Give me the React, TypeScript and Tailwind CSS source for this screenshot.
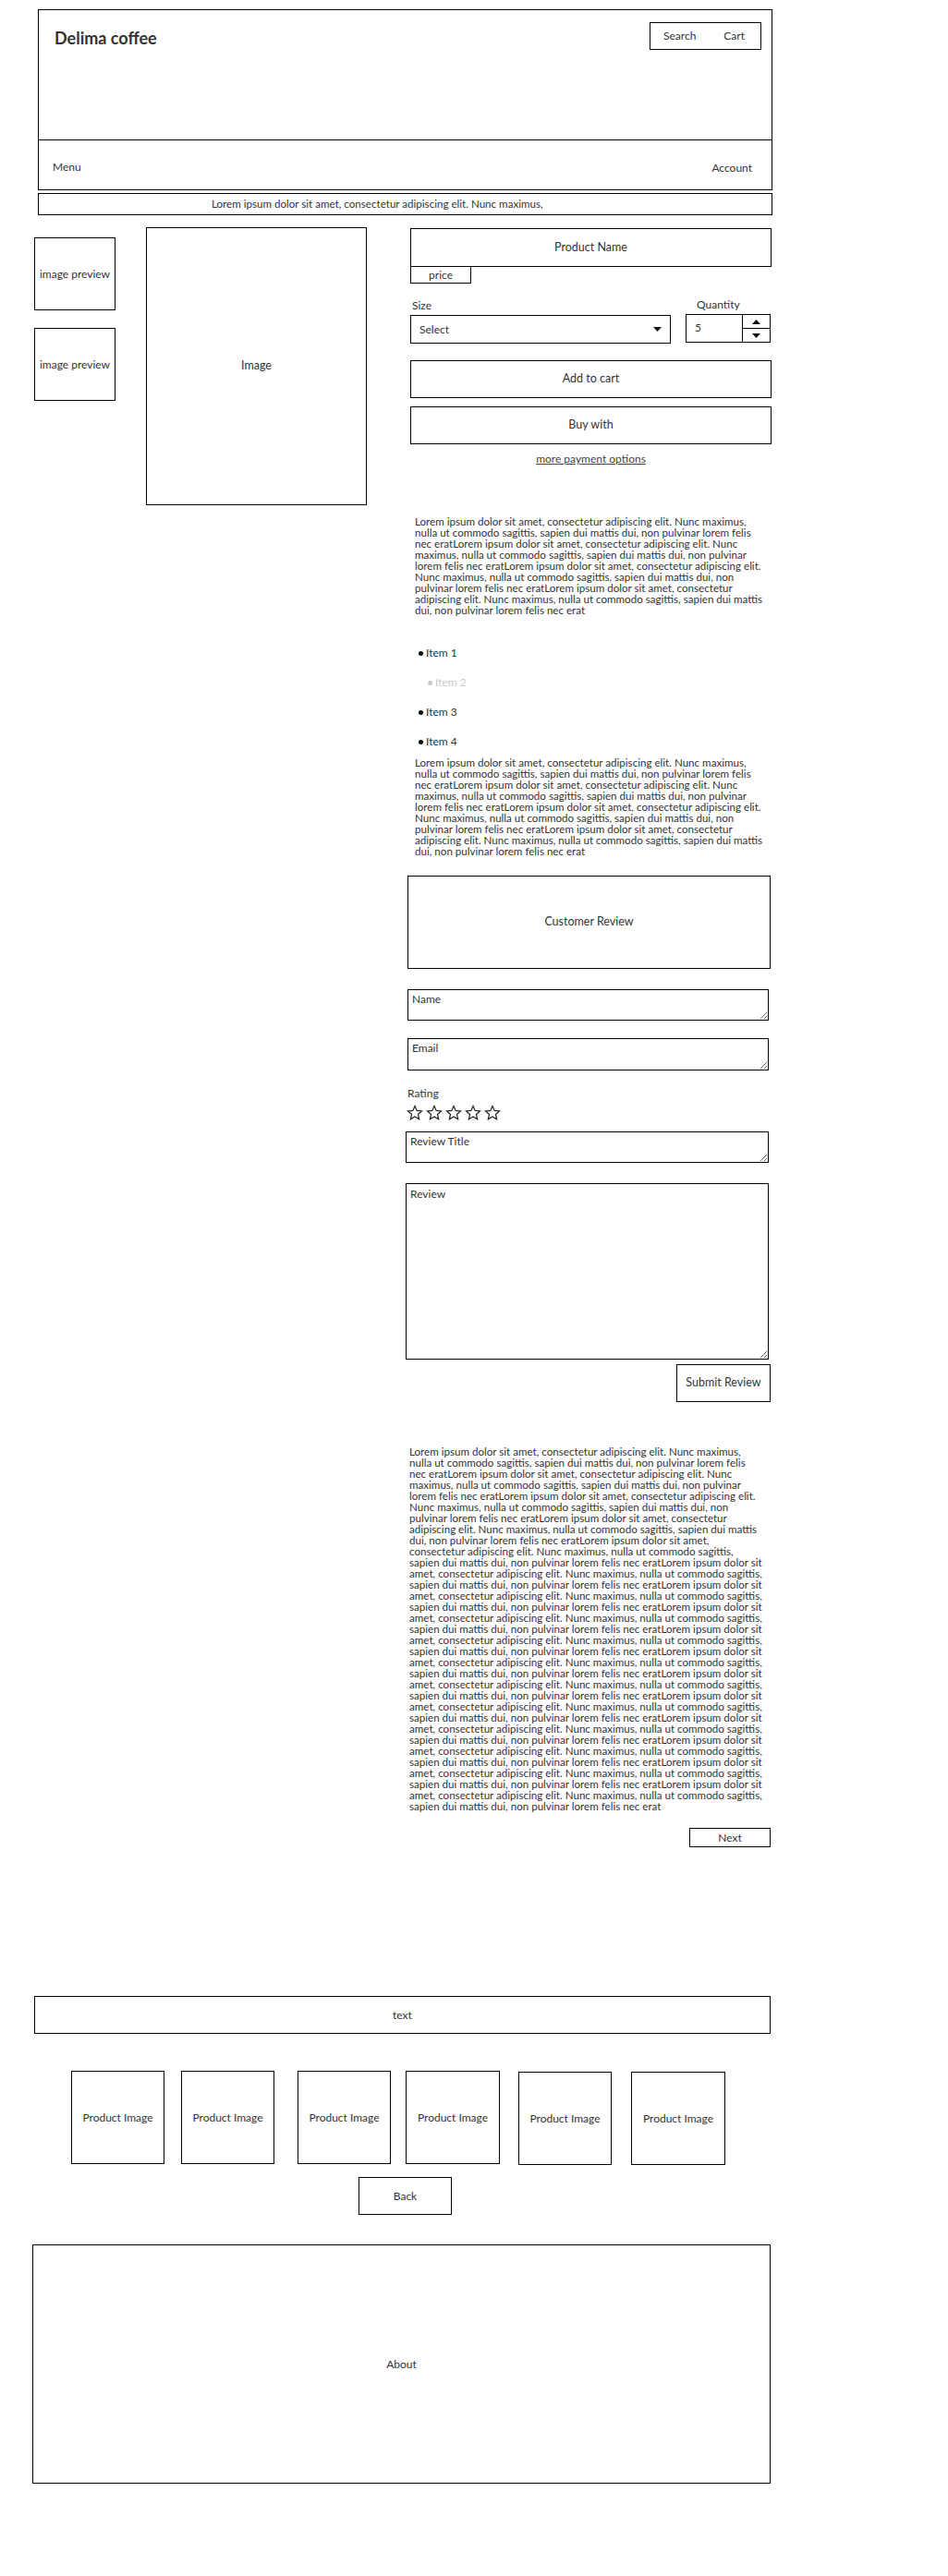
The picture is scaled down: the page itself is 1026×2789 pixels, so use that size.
import React from "react";

const P1 = [
  "Lorem ipsum dolor sit amet, consectetur adipiscing elit. Nunc maximus,",
  "nulla ut commodo sagittis, sapien dui mattis dui, non pulvinar lorem felis",
  "nec eratLorem ipsum dolor sit amet, consectetur adipiscing elit. Nunc",
  "maximus, nulla ut commodo sagittis, sapien dui mattis dui, non pulvinar",
  "lorem felis nec eratLorem ipsum dolor sit amet, consectetur adipiscing elit.",
  "Nunc maximus, nulla ut commodo sagittis, sapien dui mattis dui, non",
  "pulvinar lorem felis nec eratLorem ipsum dolor sit amet, consectetur",
  "adipiscing elit. Nunc maximus, nulla ut commodo sagittis, sapien dui mattis",
  "dui, non pulvinar lorem felis nec erat",
];

const LONG: string[] = [
  ...P1.slice(0, 8),
  "dui, non pulvinar lorem felis nec eratLorem ipsum dolor sit amet,",
  "consectetur adipiscing elit. Nunc maximus, nulla ut commodo sagittis,",
];
for (let i = 0; i < 11; i++) {
  LONG.push("sapien dui mattis dui, non pulvinar lorem felis nec eratLorem ipsum dolor sit");
  LONG.push("amet, consectetur adipiscing elit. Nunc maximus, nulla ut commodo sagittis,");
}
LONG.push("sapien dui mattis dui, non pulvinar lorem felis nec erat");

function Lines({ lines }: { lines: string[] }) {
  return (
    <div className="text-[11.6px] leading-[12px] text-[#333]">
      {lines.map((l, i) => (
        <div key={i} className="whitespace-nowrap">
          {l}
        </div>
      ))}
    </div>
  );
}

function Star() {
  return (
    <svg width="18" height="18" viewBox="0 0 24 24" fill="none" stroke="#222" strokeWidth="1.6" strokeLinejoin="miter">
      <polygon points="12,2 14.9,8.6 22,9.3 16.6,14 18.2,21 12,17.3 5.8,21 7.4,14 2,9.3 9.1,8.6" />
    </svg>
  );
}

function DownTri() {
  return (
    <svg width="9" height="5" viewBox="0 0 9 5">
      <polygon points="0,0 9,0 4.5,5" fill="#111" />
    </svg>
  );
}
function UpTri() {
  return (
    <svg width="9" height="5" viewBox="0 0 9 5">
      <polygon points="0,5 9,5 4.5,0" fill="#111" />
    </svg>
  );
}

export default function App() {
  const font = { fontFamily: "Lato, 'Noto Sans', sans-serif" };
  return (
    <div className="w-[1026px] min-h-[2789px] bg-white text-[#333]" style={font}>
      {/* Header */}
      <div className="ml-[41px] mt-[10px] w-[795px] border border-black">
        <div className="h-[140px] flex items-start justify-between">
          <div className="ml-[17px] mt-[19px] text-[18px] leading-[22px] font-bold text-[#333]">Delima coffee</div>
          <div className="mt-[13px] mr-[11px] w-[121px] h-[30px] border border-black flex items-center text-[12px]">
            <span className="ml-[14px]">Search</span>
            <span className="ml-[30px]">Cart</span>
          </div>
        </div>
        <div className="h-[54px] border-t border-black flex items-center justify-between text-[12px] pt-[5px]">
          <span className="ml-[15px]">Menu</span>
          <span className="mr-[21px] mt-[2px]">Account</span>
        </div>
      </div>

      {/* Banner */}
      <div className="ml-[41px] mt-[3px] w-[795px] h-[24px] border border-black flex items-center text-[11.6px]">
        <span className="ml-[187px]">Lorem ipsum dolor sit amet, consectetur adipiscing elit. Nunc maximus,</span>
      </div>

      {/* Main row */}
      <div className="mt-[13px] flex items-start">
        <div className="ml-[37px] mt-[11px] flex flex-col gap-[19px]">
          <div className="w-[88px] h-[79px] border border-black flex items-center justify-center text-[12px]">image preview</div>
          <div className="w-[88px] h-[79px] border border-black flex items-center justify-center text-[12px]">image preview</div>
        </div>
        <div className="ml-[33px] w-[239px] h-[301px] border border-black flex items-center justify-center text-[12.5px]">Image</div>

        {/* Right column */}
        <div className="ml-[42px] w-[396px] mt-[1px] flex flex-col">
          <div className="ml-[5px] w-[391px] h-[42px] border border-black flex items-center justify-center text-[12.5px]">Product Name</div>
          <div className="ml-[5px] w-[66px] h-[18px] border-x border-b border-black flex items-center justify-center text-[12px]">price</div>

          <div className="mt-[16px] ml-[5px] flex items-start">
            <div className="w-[282px]">
              <div className="ml-[2px] text-[12px] leading-[16px]">Size</div>
              <div className="mt-[2px] h-[31px] border border-black flex items-center justify-between text-[12px]">
                <span className="ml-[9px]">Select</span>
                <span className="mr-[9px] flex"><DownTri /></span>
              </div>
            </div>
            <div className="ml-[16px] w-[92px]">
              <div className="ml-[12px] text-[12px] leading-[16px] -mt-[1px]">Quantity</div>
              <div className="mt-[2px] h-[31px] border border-black flex text-[12px]">
                <div className="flex-1 flex items-center pl-[9px] -mt-[2px]">5</div>
                <div className="w-[30px] border-l border-black flex flex-col">
                  <div className="flex-1 flex items-center justify-center"><UpTri /></div>
                  <div className="flex-1 border-t border-black flex items-center justify-center"><DownTri /></div>
                </div>
              </div>
            </div>
          </div>

          <div className="mt-[18px] ml-[5px] w-[391px] h-[41px] border border-black flex items-center justify-center text-[12.5px]">Add to cart</div>
          <div className="mt-[9px] ml-[5px] w-[391px] h-[41px] border border-black flex items-center justify-center text-[12.5px]">Buy with</div>
          <div className="mt-[8px] ml-[5px] w-[391px] text-center text-[12px] leading-[16px]">
            <span className="underline text-[#444]">more payment options</span>
          </div>

          <div className="mt-[54px] ml-[10px]">
            <Lines lines={P1} />
          </div>

          <div className="mt-[24px] flex flex-col text-[12px]">
            <div className="h-[32px] flex items-center ml-[14px]">
              <span className="w-[5px] h-[5px] rounded-full bg-black"></span>
              <span className="ml-[3px]">Item 1</span>
            </div>
            <div className="h-[32px] flex items-center ml-[24px] text-[#c8c8c8]">
              <span className="w-[5px] h-[5px] rounded-full bg-[#c8c8c8]"></span>
              <span className="ml-[3px]">Item 2</span>
            </div>
            <div className="h-[32px] flex items-center ml-[14px]">
              <span className="w-[5px] h-[5px] rounded-full bg-black"></span>
              <span className="ml-[3px]">Item 3</span>
            </div>
            <div className="h-[32px] flex items-center ml-[14px]">
              <span className="w-[5px] h-[5px] rounded-full bg-black"></span>
              <span className="ml-[3px]">Item 4</span>
            </div>
          </div>

          <div className="mt-[1px] ml-[10px]">
            <Lines lines={P1} />
          </div>

          <div className="mt-[20px] ml-[2px] w-[393px] h-[101px] border border-black flex items-center justify-center text-[12.5px]">Customer Review</div>

          <textarea
            readOnly
            defaultValue="Name"
            className="mt-[22px] ml-[2px] w-[391px] h-[34px] border border-black px-[4px] pt-[2px] text-[12px] leading-[16px] text-[#333] resize outline-none"
          />
          <textarea
            readOnly
            defaultValue="Email"
            className="mt-[19px] ml-[2px] w-[391px] h-[35px] border border-black px-[4px] pt-[2px] text-[12px] leading-[16px] text-[#333] resize outline-none"
          />

          <div className="mt-[17px] ml-[2px] text-[12px] leading-[16px]">Rating</div>
          <div className="mt-[4px] ml-[1px] flex gap-[3px]">
            <Star />
            <Star />
            <Star />
            <Star />
            <Star />
          </div>

          <textarea
            readOnly
            defaultValue="Review Title"
            className="mt-[11px] w-[393px] h-[34px] border border-black px-[4px] pt-[2px] text-[12px] leading-[16px] text-[#333] resize outline-none"
          />
          <textarea
            readOnly
            defaultValue="Review"
            className="mt-[22px] w-[393px] h-[191px] border border-black px-[4px] pt-[3px] text-[12px] leading-[16px] text-[#333] resize outline-none"
          />

          <div className="mt-[5px] ml-[293px] w-[102px] h-[41px] border border-black flex items-center justify-center text-[12.5px]">Submit Review</div>

          <div className="mt-[48px] ml-[4px]">
            <Lines lines={LONG} />
          </div>

          <div className="mt-[17px] ml-[307px] w-[88px] h-[21px] border border-black flex items-center justify-center text-[12px]">Next</div>
        </div>
      </div>

      {/* text bar */}
      <div className="mt-[161px] ml-[37px] w-[797px] h-[41px] border border-black flex items-center justify-center text-[12px]">text</div>

      {/* Products */}
      <div className="mt-[40px] flex items-start text-[12px]">
        <div className="ml-[77px] w-[101px] h-[101px] border border-black flex items-center justify-center">Product Image</div>
        <div className="ml-[18px] w-[101px] h-[101px] border border-black flex items-center justify-center">Product Image</div>
        <div className="ml-[25px] w-[101px] h-[101px] border border-black flex items-center justify-center">Product Image</div>
        <div className="ml-[16px] w-[102px] h-[101px] border border-black flex items-center justify-center">Product Image</div>
        <div className="ml-[20px] mt-[1px] w-[101px] h-[101px] border border-black flex items-center justify-center">Product Image</div>
        <div className="ml-[21px] mt-[1px] w-[102px] h-[101px] border border-black flex items-center justify-center">Product Image</div>
      </div>

      <div className="mt-[13px] ml-[388px] w-[101px] h-[41px] border border-black flex items-center justify-center text-[12px]">Back</div>

      {/* About */}
      <div className="mt-[32px] ml-[35px] w-[799px] h-[259px] border border-black flex items-center justify-center text-[12px]">About</div>
    </div>
  );
}
